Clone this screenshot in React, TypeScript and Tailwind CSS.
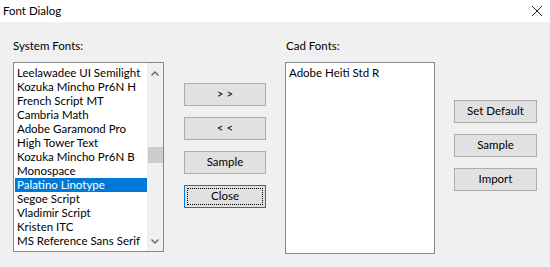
import React from "react";

const systemFonts = [
  "Leelawadee UI Semilight",
  "Kozuka Mincho Pr6N H",
  "French Script MT",
  "Cambria Math",
  "Adobe Garamond Pro",
  "High Tower Text",
  "Kozuka Mincho Pr6N B",
  "Monospace",
  "Palatino Linotype",
  "Segoe Script",
  "Vladimir Script",
  "Kristen ITC",
  "MS Reference Sans Serif",
];

function Btn({ label, focused }: { label: string; focused?: boolean }) {
  return (
    <button
      className={`relative flex h-[23px] w-full items-center justify-center border bg-[#e1e1e1] text-[11.5px] leading-none text-black ${
        focused ? "border-[#0078d7]" : "border-[#adadad]"
      }`}
    >
      {focused && <span className="absolute inset-[2px] border border-dotted border-black" />}
      <span className="-mt-[1px]">{label}</span>
    </button>
  );
}

export default function App() {
  return (
    <div
      className="flex h-[267px] w-[550px] flex-col overflow-hidden bg-[#f0f0f0] text-[11.5px] text-black"
      style={{ fontFamily: 'Lato, "Noto Sans", sans-serif' }}
    >
      <div className="flex h-[22px] shrink-0 items-center justify-between bg-white pl-[3px] pr-[6px]">
        <span className="-mt-[1px] leading-none">Font Dialog</span>
        <svg width="12" height="12" viewBox="0 0 12 12" className="mr-[1px]">
          <path d="M1 1 L11 11 M11 1 L1 11" stroke="#222" strokeWidth="1" />
        </svg>
      </div>

      <div className="flex pl-[13px]">
        {/* system fonts */}
        <div className="flex w-[151px] flex-col">
          <div className="mt-[16px] h-[16px] leading-[16px]">System Fonts:</div>
          <div className="mt-[8px] flex h-[190px] border border-[#828790] bg-white">
            <ul className="flex-1 pl-[1px] pt-[3px]">
              {systemFonts.map((f) => (
                <li
                  key={f}
                  className={`h-[14px] whitespace-nowrap pl-[2px] leading-[14px] ${
                    f === "Palatino Linotype" ? "bg-[#0078d7] text-white" : ""
                  }`}
                >
                  {f}
                </li>
              ))}
            </ul>
            <div className="flex w-[16px] flex-col items-center bg-[#f0f0f0]">
              <svg width="8" height="5" viewBox="0 0 8 5" className="mt-[8px]">
                <path d="M0.5 4.5 L4 1 L7.5 4.5" stroke="#606060" strokeWidth="1.3" fill="none" />
              </svg>
              <div className="mt-[71px] h-[16px] w-[15px] bg-[#cdcdcd]" />
              <div className="flex-1" />
              <svg width="8" height="5" viewBox="0 0 8 5" className="mb-[7px]">
                <path d="M0.5 0.5 L4 4 L7.5 0.5" stroke="#606060" strokeWidth="1.3" fill="none" />
              </svg>
            </div>
          </div>
        </div>

        {/* transfer buttons */}
        <div className="ml-[20px] flex w-[82px] flex-col gap-[11px] pt-[61px]">
          <Btn label="> >" />
          <Btn label="< <" />
          <Btn label="Sample" />
          <Btn label="Close" focused />
        </div>

        {/* cad fonts */}
        <div className="ml-[19px] flex w-[150px] flex-col">
          <div className="mt-[16px] h-[16px] pl-[1px] leading-[16px]">Cad Fonts:</div>
          <div className="mt-[8px] h-[192px] border border-[#828790] bg-white pl-[3px] pt-[3px]">
            <div className="h-[14px] leading-[14px]">Adobe Heiti Std R</div>
          </div>
        </div>

        {/* actions */}
        <div className="ml-[19px] flex w-[83px] flex-col gap-[11px] pt-[78px]">
          <Btn label="Set Default" />
          <Btn label="Sample" />
          <Btn label="Import" />
        </div>
      </div>
    </div>
  );
}
